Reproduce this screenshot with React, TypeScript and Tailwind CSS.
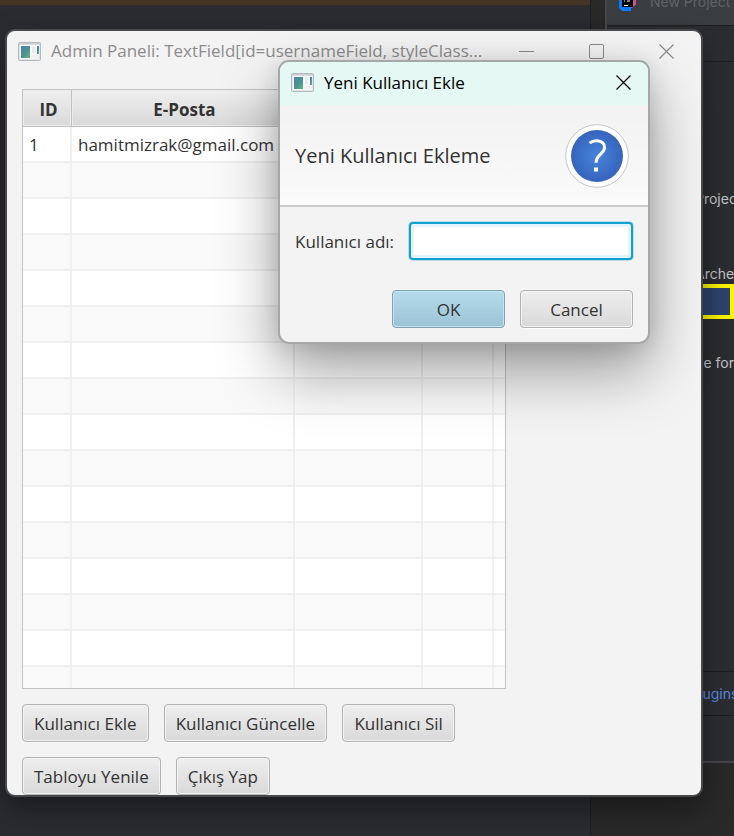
import { useId } from "react";

type User = { id: string; email: string };

const users: User[] = [{ id: "1", email: "hamitmizrak@gmail.com" }];
const emptyRows = Array.from({ length: 15 }, (_, i) => i);

function AppIcon() {
  const gradient = useId();
  return (
    <svg width="23" height="19" viewBox="0 0 23 19" className="shrink-0" aria-hidden="true">
      <defs>
        <linearGradient id={gradient} x1="0" y1="0" x2="1" y2="1">
          <stop offset="0" stopColor="#4a7fb4" />
          <stop offset="0.55" stopColor="#4a9490" />
          <stop offset="1" stopColor="#66b878" />
        </linearGradient>
      </defs>
      <rect x="0.5" y="0.5" width="22" height="18" rx="1" fill="#e4e7ea" stroke="#b3b8bd" />
      <rect x="1" y="1" width="21" height="1.5" fill="#c9ced5" />
      <rect x="2" y="3" width="19" height="14" fill="#f8f8f8" />
      <rect x="3" y="4" width="9" height="12" fill={`url(#${gradient})`} />
      <rect x="14" y="4" width="3" height="7" fill="#ebebeb" />
      <rect x="14" y="13" width="7" height="3" fill="#f0f0f0" />
      <rect x="19" y="4" width="2" height="8" fill={`url(#${gradient})`} />
    </svg>
  );
}

function CloseGlyph() {
  return (
    <svg width="15" height="15" viewBox="0 0 15 15" fill="none" stroke="currentColor" strokeWidth="1.3" aria-hidden="true">
      <path d="M0.5 0.5 14.5 14.5M14.5 0.5 0.5 14.5" />
    </svg>
  );
}

function FxButton({ label, primary, wide }: { label: string; primary?: boolean; wide?: boolean }) {
  const tone = primary
    ? "border-[#7fa3b3] bg-linear-to-b from-[#b4dcec] to-[#9cc3d5] shadow-[inset_0_0_0_1px_#c4e3ef]"
    : "border-[#b2b2b2] bg-linear-to-b from-[#eeeeee] to-[#d9d9d9] shadow-[inset_0_0_0_1px_#f3f3f3,0_1px_0_#fbfbfb]";
  const size = wide ? "w-[113px]" : "px-[11px]";
  return (
    <button type="button" className={`h-[38px] rounded border pt-px text-center whitespace-nowrap ${tone} ${size}`}>
      {label}
    </button>
  );
}

function Ide() {
  return (
    <div className="flex h-full bg-[#2a2c30] text-sm">
      <div className="min-w-0 flex-1">
        <div className="h-[5px] bg-[#433426]" />
      </div>
      <div className="flex w-[144px] shrink-0 flex-col border-l border-[#1c1d1f] bg-[#292929] pl-[14px] font-['Inter',sans-serif] whitespace-nowrap text-[#c4c6ca]">
        <div className="h-[763px] overflow-hidden border-b-2 border-l-2 border-[#45474a] bg-[#2b2d30]">
          <div className="flex h-[26px] gap-[13px] border-b border-[#1c1d1f] bg-[#3a3e40] pl-[10px]">
            <svg width="20" height="12" viewBox="0 0 20 12" className="shrink-0" aria-hidden="true">
              <path d="M2 0H14V11H5L2 8Z" fill="#087cfa" />
              <path d="M14 0H19V4L15 8H13Z" fill="#a45bd0" />
              <path d="M17 0H19V4L17 6Z" fill="#e8487f" />
              <path d="M5 0H16V7H5Z" fill="#000" />
              <path d="M7 5.5H11M10 1H13M7 1H8" stroke="#fff" />
            </svg>
            <span className="-mt-2 h-5 leading-5 text-[#606467]">New Project</span>
          </div>
          <div className="h-9 border-b border-[#1f2022]" />
          <div className="pl-[88px]">
            <div className="pt-[127px] leading-5">Projec</div>
            <div className="pt-[55px] leading-5">Arche</div>
          </div>
          <div className="h-[35px] border-4 border-[#fbf500] bg-[#2e436e]" />
          <div className="pt-[34px] pl-[89px] leading-5">se for</div>
          <div className="mt-[298px] flex h-[45px] items-center border-y border-[#1d1e20] pl-[92px]">
            <a href="#plugins" className="text-[#5d86e0]">lugins</a>
          </div>
        </div>
      </div>
    </div>
  );
}

function UserTable() {
  return (
    <div className="h-[600px] overflow-hidden border border-[#c4c4c4] bg-white">
      <table className="w-full table-fixed border-separate border-spacing-0">
        <colgroup>
          <col className="w-[49px]" />
          <col className="w-[223px]" />
          <col className="w-32" />
          <col className="w-[71px]" />
          <col />
        </colgroup>
        <thead>
          <tr className="[&>th]:h-[37px] [&>th]:border-r [&>th]:border-b [&>th]:border-[#c0c0c0] [&>th]:bg-linear-to-b [&>th]:from-[#efefef] [&>th]:to-[#d9d9d9] [&>th]:p-0 [&>th]:pt-[3px] [&>th]:pl-[3px] [&>th]:font-bold [&>th]:shadow-[inset_0_0_0_1px_#ebebeb]">
            <th scope="col">ID</th>
            <th scope="col">E-Posta</th>
            <th />
            <th />
            <th />
          </tr>
        </thead>
        <tbody className="[&_td]:h-9 [&_td]:border-r-2 [&_td]:border-b-2 [&_td]:border-[#f0f0f0] [&_td]:p-0 [&_td]:pt-px [&_td]:pl-[6px] [&_td:last-child]:border-r-0 [&>tr:nth-child(even)]:bg-[#f9f9f9]">
          {users.map((user) => (
            <tr key={user.id}>
              <td>{user.id}</td>
              <td className="whitespace-nowrap">{user.email}</td>
              <td />
              <td />
              <td />
            </tr>
          ))}
          {emptyRows.map((row) => (
            <tr key={row}>
              <td />
              <td />
              <td />
              <td />
              <td />
            </tr>
          ))}
        </tbody>
      </table>
    </div>
  );
}

function AdminWindow() {
  return (
    <section className="absolute top-[29px] right-[31px] left-[5px] h-[768px] overflow-hidden rounded-[10px] border-2 border-[#47494b] bg-[#f3f3f3] shadow-[0_12px_30px_rgba(0,0,0,0.4)]">
      <header className="flex h-10 items-center pr-[27px] pl-[11px] text-[#8c8c8c]">
        <AppIcon />
        <h1 className="ml-[10px] w-[430px] shrink-0 whitespace-nowrap">
          Admin Paneli: TextField[id=usernameField, styleClass...
        </h1>
        <div className="ml-auto flex shrink-0 gap-[55px]">
          <button type="button" aria-label="Minimize" className="flex h-[15px] w-[15px] items-center">
            <span className="h-px w-full bg-current" />
          </button>
          <button type="button" aria-label="Maximize" className="h-[15px] w-[15px] rounded-xs border border-current" />
          <button type="button" aria-label="Close">
            <CloseGlyph />
          </button>
        </div>
      </header>
      <main className="ml-[15px] w-[484px] pt-[18px]">
        <UserTable />
        <div className="mt-[15px] flex flex-wrap gap-[15px]">
          <FxButton label="Kullanıcı Ekle" />
          <FxButton label="Kullanıcı Güncelle" />
          <FxButton label="Kullanıcı Sil" wide />
          <FxButton label="Tabloyu Yenile" />
          <FxButton label="Çıkış Yap" />
        </div>
      </main>
    </section>
  );
}

function AddUserDialog() {
  return (
    <section
      role="dialog"
      aria-label="Yeni Kullanıcı Ekle"
      className="absolute top-[60px] left-[278px] w-[372px] overflow-hidden rounded-[11px] border-2 border-[#a6a8a8] bg-[#f3f3f3] shadow-[0_28px_60px_rgba(0,0,0,0.36),0_4px_24px_rgba(0,0,0,0.12)]"
    >
      <header className="flex h-[43px] items-center bg-[#e5f8f4] pr-[17px] pb-[2px] pl-[11px] text-black">
        <AppIcon />
        <h2 className="ml-[10px]">Yeni Kullanıcı Ekle</h2>
        <button type="button" aria-label="Close" className="ml-auto">
          <CloseGlyph />
        </button>
      </header>
      <div className="flex h-[102px] items-center justify-between border-b-2 border-[#cccccc] bg-linear-to-b from-[#f2f2f2] to-[#fafafa] pt-[2px] pr-[19px] pl-[15px]">
        <p className="text-[20px]">Yeni Kullanıcı Ekleme</p>
        <svg width="64" height="64" viewBox="0 0 64 64" aria-hidden="true">
          <defs>
            <radialGradient id="help">
              <stop offset="0" stopColor="#4685da" />
              <stop offset="1" stopColor="#3763bd" />
            </radialGradient>
          </defs>
          <circle cx="32" cy="32" r="31.3" fill="#fff" stroke="#c6c6c6" />
          <circle cx="32" cy="32" r="26" fill="url(#help)" />
          <path d="M24.5 19.2C27 17.1 29.6 16.6 32 16.7C37 16.9 39.8 19.8 39.6 23.6C39.2 30.2 31 30.4 31 38.8" fill="none" stroke="#fff" strokeWidth="3" />
          <path d="M29 43.5H33V47.5H29Z" fill="#fff" />
        </svg>
      </div>
      <form className="px-[15px] pt-[15px] pb-[14px]">
        <div className="flex h-[38px] items-center gap-[14px]">
          <label htmlFor="username" className="w-[100px] shrink-0 pt-[2px] whitespace-nowrap">Kullanıcı adı:</label>
          <input
            id="username"
            type="text"
            className="h-full min-w-0 flex-1 rounded border-2 border-[#149fd1] bg-white px-2 shadow-[inset_0_0_0_3px_#e4f4fa,0_0_0_1px_#b5dfee] outline-none"
          />
        </div>
        <div className="mt-[30px] flex justify-end gap-[15px]">
          <FxButton label="OK" primary wide />
          <FxButton label="Cancel" wide />
        </div>
      </form>
    </section>
  );
}

export default function App() {
  return (
    <div className="relative h-screen min-h-[836px] overflow-hidden font-['Open_Sans','Noto_Sans',sans-serif] text-[17px] leading-6 text-[#333333]">
      <Ide />
      <AdminWindow />
      <AddUserDialog />
    </div>
  );
}
